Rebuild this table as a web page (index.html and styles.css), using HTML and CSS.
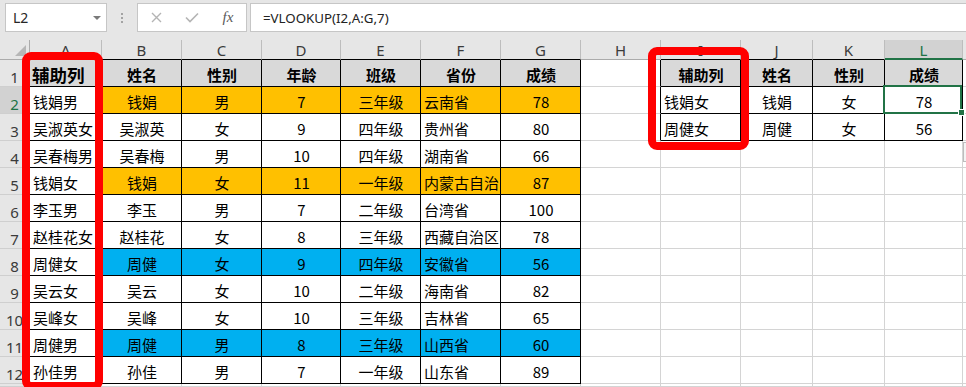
FILE: index.html
```html
<!DOCTYPE html>
<html lang="zh-CN">
<head>
<meta charset="utf-8">
<title>VLOOKUP 辅助列</title>
<link rel="stylesheet" href="styles.css">
</head>
<body>
<div class="toolbar">
  <div class="namebox"><span>L2</span><span class="caret"></span></div>
  <div class="grip"><i></i><i></i><i></i></div>
  <div class="fbtns">
    <span class="slot"><svg width="11" height="11" viewBox="0 0 11 11"><path d="M1 1L10 10M10 1L1 10" stroke="#b4b4b4" stroke-width="1.4" fill="none"/></svg></span>
    <span class="slot"><svg width="14" height="11" viewBox="0 0 14 11"><path d="M1 5.5L5 9.5L13 1.5" stroke="#b4b4b4" stroke-width="1.6" fill="none"/></svg></span>
    <span class="slot fx">fx</span>
  </div>
  <div class="formula">=VLOOKUP(I2,A:G,7)</div>
</div>

<div class="sheet">
  <!-- column headers -->
  <div class="c corner"><span class="tri"></span></div>
  <div class="c ch hk">A</div>
  <div class="c ch hk">B</div>
  <div class="c ch hk">C</div>
  <div class="c ch hk">D</div>
  <div class="c ch hk">E</div>
  <div class="c ch hk">F</div>
  <div class="c ch hk">G</div>
  <div class="c ch">H</div>
  <div class="c ch hk">I</div>
  <div class="c ch hk">J</div>
  <div class="c ch hk">K</div>
  <div class="c ch selh">L</div>
  <div class="c ch"></div>

  <!-- row 1 -->
  <div class="c rh">1</div>
  <div class="c t th a1">辅助列</div>
  <div class="c t th">姓名</div>
  <div class="c t th">性别</div>
  <div class="c t th">年龄</div>
  <div class="c t th">班级</div>
  <div class="c t th">省份</div>
  <div class="c t th">成绩</div>
  <div class="c lk"></div>
  <div class="c t th">辅助列</div>
  <div class="c t th">姓名</div>
  <div class="c t th">性别</div>
  <div class="c t th">成绩</div>
  <div class="c"></div>

  <!-- row 2 -->
  <div class="c rh rsel">2</div>
  <div class="c t">钱娟男</div>
  <div class="c t o ctr">钱娟</div>
  <div class="c t o ctr">男</div>
  <div class="c t o ctr">7</div>
  <div class="c t o ctr">三年级</div>
  <div class="c t o">云南省</div>
  <div class="c t o ctr">78</div>
  <div class="c lk"></div>
  <div class="c t">钱娟女</div>
  <div class="c t ctr">钱娟</div>
  <div class="c t ctr">女</div>
  <div class="c t ctr selcell">78<span class="sel"></span><span class="handle"></span></div>
  <div class="c"></div>

  <!-- row 3 -->
  <div class="c rh">3</div>
  <div class="c t">吴淑英女</div>
  <div class="c t ctr">吴淑英</div>
  <div class="c t ctr">女</div>
  <div class="c t ctr">9</div>
  <div class="c t ctr">四年级</div>
  <div class="c t">贵州省</div>
  <div class="c t ctr">80</div>
  <div class="c lk"></div>
  <div class="c t">周健女</div>
  <div class="c t ctr">周健</div>
  <div class="c t ctr">女</div>
  <div class="c t ctr">56</div>
  <div class="c"></div>

  <!-- row 4 -->
  <div class="c rh">4</div>
  <div class="c t">吴春梅男</div>
  <div class="c t ctr">吴春梅</div>
  <div class="c t ctr">男</div>
  <div class="c t ctr">10</div>
  <div class="c t ctr">四年级</div>
  <div class="c t">湖南省</div>
  <div class="c t ctr">66</div>
  <div class="c"></div><div class="c"></div><div class="c"></div><div class="c"></div><div class="c"></div><div class="c"></div>

  <!-- row 5 -->
  <div class="c rh">5</div>
  <div class="c t">钱娟女</div>
  <div class="c t o ctr">钱娟</div>
  <div class="c t o ctr">女</div>
  <div class="c t o ctr">11</div>
  <div class="c t o ctr">一年级</div>
  <div class="c t o">内蒙古自治</div>
  <div class="c t o ctr">87</div>
  <div class="c"></div><div class="c"></div><div class="c"></div><div class="c"></div><div class="c"></div><div class="c"></div>

  <!-- row 6 -->
  <div class="c rh">6</div>
  <div class="c t">李玉男</div>
  <div class="c t ctr">李玉</div>
  <div class="c t ctr">男</div>
  <div class="c t ctr">7</div>
  <div class="c t ctr">二年级</div>
  <div class="c t">台湾省</div>
  <div class="c t ctr">100</div>
  <div class="c"></div><div class="c"></div><div class="c"></div><div class="c"></div><div class="c"></div><div class="c"></div>

  <!-- row 7 -->
  <div class="c rh">7</div>
  <div class="c t">赵桂花女</div>
  <div class="c t ctr">赵桂花</div>
  <div class="c t ctr">女</div>
  <div class="c t ctr">8</div>
  <div class="c t ctr">三年级</div>
  <div class="c t">西藏自治区</div>
  <div class="c t ctr">78</div>
  <div class="c"></div><div class="c"></div><div class="c"></div><div class="c"></div><div class="c"></div><div class="c"></div>

  <!-- row 8 -->
  <div class="c rh">8</div>
  <div class="c t">周健女</div>
  <div class="c t b ctr">周健</div>
  <div class="c t b ctr">女</div>
  <div class="c t b ctr">9</div>
  <div class="c t b ctr">四年级</div>
  <div class="c t b">安徽省</div>
  <div class="c t b ctr">56</div>
  <div class="c"></div><div class="c"></div><div class="c"></div><div class="c"></div><div class="c"></div><div class="c"></div>

  <!-- row 9 -->
  <div class="c rh">9</div>
  <div class="c t">吴云女</div>
  <div class="c t ctr">吴云</div>
  <div class="c t ctr">女</div>
  <div class="c t ctr">10</div>
  <div class="c t ctr">二年级</div>
  <div class="c t">海南省</div>
  <div class="c t ctr">82</div>
  <div class="c"></div><div class="c"></div><div class="c"></div><div class="c"></div><div class="c"></div><div class="c"></div>

  <!-- row 10 -->
  <div class="c rh">10</div>
  <div class="c t">吴峰女</div>
  <div class="c t ctr">吴峰</div>
  <div class="c t ctr">女</div>
  <div class="c t ctr">10</div>
  <div class="c t ctr">三年级</div>
  <div class="c t">吉林省</div>
  <div class="c t ctr">65</div>
  <div class="c"></div><div class="c"></div><div class="c"></div><div class="c"></div><div class="c"></div><div class="c"></div>

  <!-- row 11 -->
  <div class="c rh">11</div>
  <div class="c t">周健男</div>
  <div class="c t b ctr">周健</div>
  <div class="c t b ctr">男</div>
  <div class="c t b ctr">8</div>
  <div class="c t b ctr">三年级</div>
  <div class="c t b">山西省</div>
  <div class="c t b ctr">60</div>
  <div class="c"></div><div class="c"></div><div class="c"></div><div class="c"></div><div class="c"></div><div class="c"></div>

  <!-- row 12 -->
  <div class="c rh">12</div>
  <div class="c t">孙佳男</div>
  <div class="c t ctr">孙佳</div>
  <div class="c t ctr">男</div>
  <div class="c t ctr">7</div>
  <div class="c t ctr">一年级</div>
  <div class="c t">山东省</div>
  <div class="c t ctr">89</div>
  <div class="c"></div><div class="c"></div><div class="c"></div><div class="c"></div><div class="c"></div><div class="c"></div>

  <!-- row 13 (only the top sliver is visible) -->
  <div class="c rh"></div>
  <div class="c"></div><div class="c"></div><div class="c"></div><div class="c"></div><div class="c"></div><div class="c"></div><div class="c"></div>
  <div class="c"></div><div class="c"></div><div class="c"></div><div class="c"></div><div class="c"></div><div class="c"></div>
</div>

<div class="hl hl1"></div>
<div class="hl hl2"></div>
<div class="paste"></div>
</body>
</html>
```

FILE: styles.css
```css
* { box-sizing: border-box; }
html, body { margin: 0; padding: 0; }
body {
  width: 966px;
  height: 387px;
  overflow: hidden;
  position: relative;
  background: #ffffff;
  font-family: "Noto Sans CJK SC", "Noto Sans", sans-serif;
  color: #000;
}

/* ---------- formula bar ---------- */
.toolbar {
  height: 40px;
  background: #e6e6e6;
  display: flex;
  align-items: flex-start;
  padding: 3px 0 0 5px;
}
.namebox {
  width: 102px;
  height: 29px;
  background: #fff;
  border: 1px solid #c6c6c6;
  display: flex;
  align-items: center;
  justify-content: space-between;
  padding: 0 5px 0 7px;
  font-family: "Noto Sans", sans-serif;
  font-size: 14px;
  color: #262626;
}
.caret {
  width: 0;
  height: 0;
  border-left: 4px solid transparent;
  border-right: 4px solid transparent;
  border-top: 4px solid #7a7a7a;
  margin-top: 1px;
}
.grip {
  width: 30px;
  height: 29px;
  display: flex;
  flex-direction: column;
  align-items: center;
  justify-content: center;
  gap: 2px;
}
.grip i {
  display: block;
  width: 2px;
  height: 2px;
  background: #a3a3a3;
}
.fbtns {
  width: 110px;
  height: 29px;
  background: #fff;
  border: 1px solid #c6c6c6;
  display: flex;
  align-items: center;
}
.slot {
  width: 36px;
  height: 100%;
  display: flex;
  align-items: center;
  justify-content: center;
}
.fx {
  font-family: "Liberation Serif", serif;
  font-style: italic;
  font-size: 15px;
  color: #5a5a5a;
  padding-bottom: 1px;
}
.formula {
  flex: 1;
  height: 29px;
  margin-left: 3px;
  background: #fff;
  border: 1px solid #c6c6c6;
  border-right: none;
  display: flex;
  align-items: center;
  padding-left: 12px;
  font-family: "Noto Sans", sans-serif;
  font-size: 13.3px;
  color: #222;
}

/* ---------- grid ---------- */
.sheet {
  display: grid;
  grid-template-columns: 30px 72px 80px 80px 79px 80px 80px 80px 80px 80px 72px 72px 78px 1fr;
  grid-template-rows: 20px repeat(12, 27px) 3px;
}
.c {
  border-right: 1px solid #d4d4d4;
  border-bottom: 1px solid #d4d4d4;
  display: flex;
  align-items: center;
  padding: 2px 2px 0 3px;
  font-size: 15px;
  white-space: nowrap;
  overflow: hidden;
}
.corner {
  background: #e6e6e6;
  border-right: 1px solid #ababab;
  border-bottom: 1px solid #ababab;
  align-items: flex-end;
  justify-content: flex-end;
  padding: 0 3px 3px 0;
}
.tri {
  width: 0;
  height: 0;
  border-left: 11px solid transparent;
  border-bottom: 11px solid #b6b6b6;
}
.ch {
  background: #e6e6e6;
  border-right: 1px solid #bdbdbd;
  border-bottom: 1px solid #ababab;
  justify-content: center;
  font-family: "Noto Sans", sans-serif;
  font-size: 15px;
  color: #3a3a3a;
  padding: 1px 0 0 0;
}
.ch.hk { border-bottom-color: #000; }
.selh {
  background: #d2d2d2;
  color: #217346;
  border-bottom: 2px solid #217346;
}
.rh {
  background: #e6e6e6;
  border-right: 1px solid #ababab;
  border-bottom: 1px solid #cfcfcf;
  justify-content: center;
  align-items: flex-end;
  font-family: "Noto Sans", sans-serif;
  font-size: 15px;
  line-height: 16px;
  color: #3a3a3a;
  padding: 0 0 1px 0;
}
.rsel {
  background: #d2d2d2;
  color: #217346;
}

/* table cells */
.t {
  border-right-color: #000;
  border-bottom-color: #000;
}
.lk { border-right-color: #000; }
.th {
  background: #d9d9d9;
  font-weight: bold;
  justify-content: center;
}
.a1 {
  justify-content: flex-start;
  font-size: 17.5px;
  padding-left: 2px;
}
.ctr { justify-content: center; }
.o { background: #ffc000; }
.b { background: #00b0f0; }

/* selected cell */
.selcell {
  position: relative;
  overflow: visible;
}
.sel {
  position: absolute;
  left: -2px;
  top: -2px;
  right: 0;
  bottom: -1px;
  border: 2px solid #217346;
}
.handle {
  position: absolute;
  right: -3px;
  bottom: -3px;
  width: 7px;
  height: 7px;
  background: #217346;
  border: 1px solid #fff;
}

/* red highlight frames */
.hl {
  position: absolute;
  border: 8px solid #ff0000;
  border-radius: 9px;
}
.hl1 { left: 22px; top: 52px; width: 81px; height: 338px; }
.hl2 { left: 648px; top: 47px; width: 101px; height: 103px; }

.paste {
  position: absolute;
  left: 963px;
  top: 142px;
  width: 20px;
  height: 20px;
  background: #f4f4f4;
  border: 1px solid #bdbdbd;
}
```
